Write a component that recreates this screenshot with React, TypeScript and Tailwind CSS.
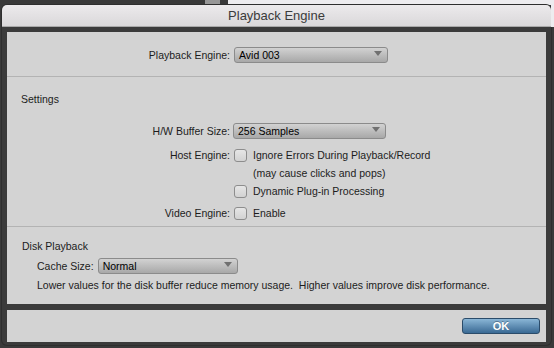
const label = "text-[10.5px] leading-[14px] text-[#1c1c1c]";

function Popup({ value, width }: { value: string; width: string }) {
  return (
    <div
      className={`flex h-[16px] items-start justify-between rounded-[3px] border border-[#8b8b8b] bg-linear-to-b from-[#d2d2d2] to-[#a8a8a8] pl-[4px] pr-[5px] ${width}`}
    >
      <span className="text-[10.5px] leading-[15px] text-black">{value}</span>
      <svg width="8" height="5" className="mt-[3px]">
        <path d="M0 0h8L4 5z" fill="#707070" />
      </svg>
    </div>
  );
}

function Checkbox() {
  return (
    <div className="h-[13px] w-[13px] shrink-0 rounded-[3px] border border-[#8d8d8d] bg-linear-to-b from-[#e6e6e6] to-[#d2d2d2]" />
  );
}

function Row({ name, children, className }: { name?: string; children: React.ReactNode; className: string }) {
  return (
    <div className={`flex h-[16px] items-center ${className}`}>
      <div className={`w-[223px] shrink-0 text-right ${label}`}>{name}</div>
      <div className="ml-[4px] flex items-center">{children}</div>
    </div>
  );
}

export default function App() {
  return (
    <div className="h-[348px] w-[554px] overflow-hidden bg-[#3a3a3a] font-['Liberation_Sans',Arial,sans-serif]">
      {/* desktop behind the dialog */}
      <div className="flex h-[5px]">
        <div className="w-[205px] bg-[#393939]" />
        <div className="w-[15px] bg-[#979797]" />
        <div className="w-[8px] bg-[#393939]" />
        <div className="flex-1 bg-[#edecef]" />
      </div>

      <div className="flex">
        <div className="w-[2px]" />
        <div className="w-[549px] overflow-hidden rounded-t-[5px] rounded-b-[5px] bg-[#3b3b3b] shadow-[0_0_0_1px_#2e2e2e]">
          <div className="flex h-[22px] items-center justify-center border-b border-[#a9a9a9] bg-linear-to-b from-[#eceaec] to-[#dad8da]">
            <span className="text-[13px] leading-[16px] text-[#3b3b3b]">Playback Engine</span>
          </div>

          <div className="px-[5px] pt-[5px] pb-[3px]">
            <div className="bg-[#d3d3d3]">
              <div className="h-[45px] border-b border-[#b3b3b3] pt-[15px]">
                <Row name="Playback Engine:" className="">
                  <Popup value="Avid 003" width="w-[154px]" />
                </Row>
              </div>

              <div className="h-[150px] border-b border-[#b3b3b3] pt-[15px]">
                <div className={`h-[14px] pl-[14px] ${label}`}>Settings</div>
                <Row name="H/W Buffer Size:" className="mt-[17px]">
                  <div className="-ml-[1px]">
                    <Popup value="256 Samples" width="w-[153px]" />
                  </div>
                </Row>
                <Row name="Host Engine:" className="mt-[8px]">
                  <Checkbox />
                  <span className={`ml-[6px] ${label}`}>Ignore Errors During Playback/Record</span>
                </Row>
                <Row className="mt-[2px]">
                  <span className={`ml-[19px] ${label}`}>(may cause clicks and pops)</span>
                </Row>
                <Row className="mt-[2px]">
                  <Checkbox />
                  <span className={`ml-[6px] ${label}`}>Dynamic Plug-in Processing</span>
                </Row>
                <Row name="Video Engine:" className="mt-[6px]">
                  <Checkbox />
                  <span className={`ml-[6px] ${label}`}>Enable</span>
                </Row>
              </div>

              <div className="h-[77px] pt-[12px]">
                <div className={`h-[14px] pl-[15px] ${label}`}>Disk Playback</div>
                <div className="mt-[5px] flex h-[16px] items-center pl-[30px]">
                  <span className={label}>Cache Size:</span>
                  <div className="ml-[4px]">
                    <Popup value="Normal" width="w-[140px]" />
                  </div>
                </div>
                <div className={`mt-[4px] h-[14px] pl-[30px] ${label}`}>
                  Lower values for the disk buffer reduce memory usage.&nbsp; Higher values improve disk performance.
                </div>
              </div>
            </div>

            <div className="mt-[6px] flex h-[32px] items-center justify-end bg-[#d3d3d3] pr-[6px]">
              <button className="h-[16px] w-[78px] rounded-[3px] border border-[#2b4c6a] bg-linear-to-b from-[#8ab6d6] to-[#3a6a94] text-[11px] leading-[14px] font-bold text-white [text-shadow:0_-1px_0_rgba(0,0,0,0.3)]">
                OK
              </button>
            </div>
          </div>
        </div>
        <div className="w-[3px]">
          <div className="h-[22px] bg-[#edecef]" />
        </div>
      </div>
    </div>
  );
}
